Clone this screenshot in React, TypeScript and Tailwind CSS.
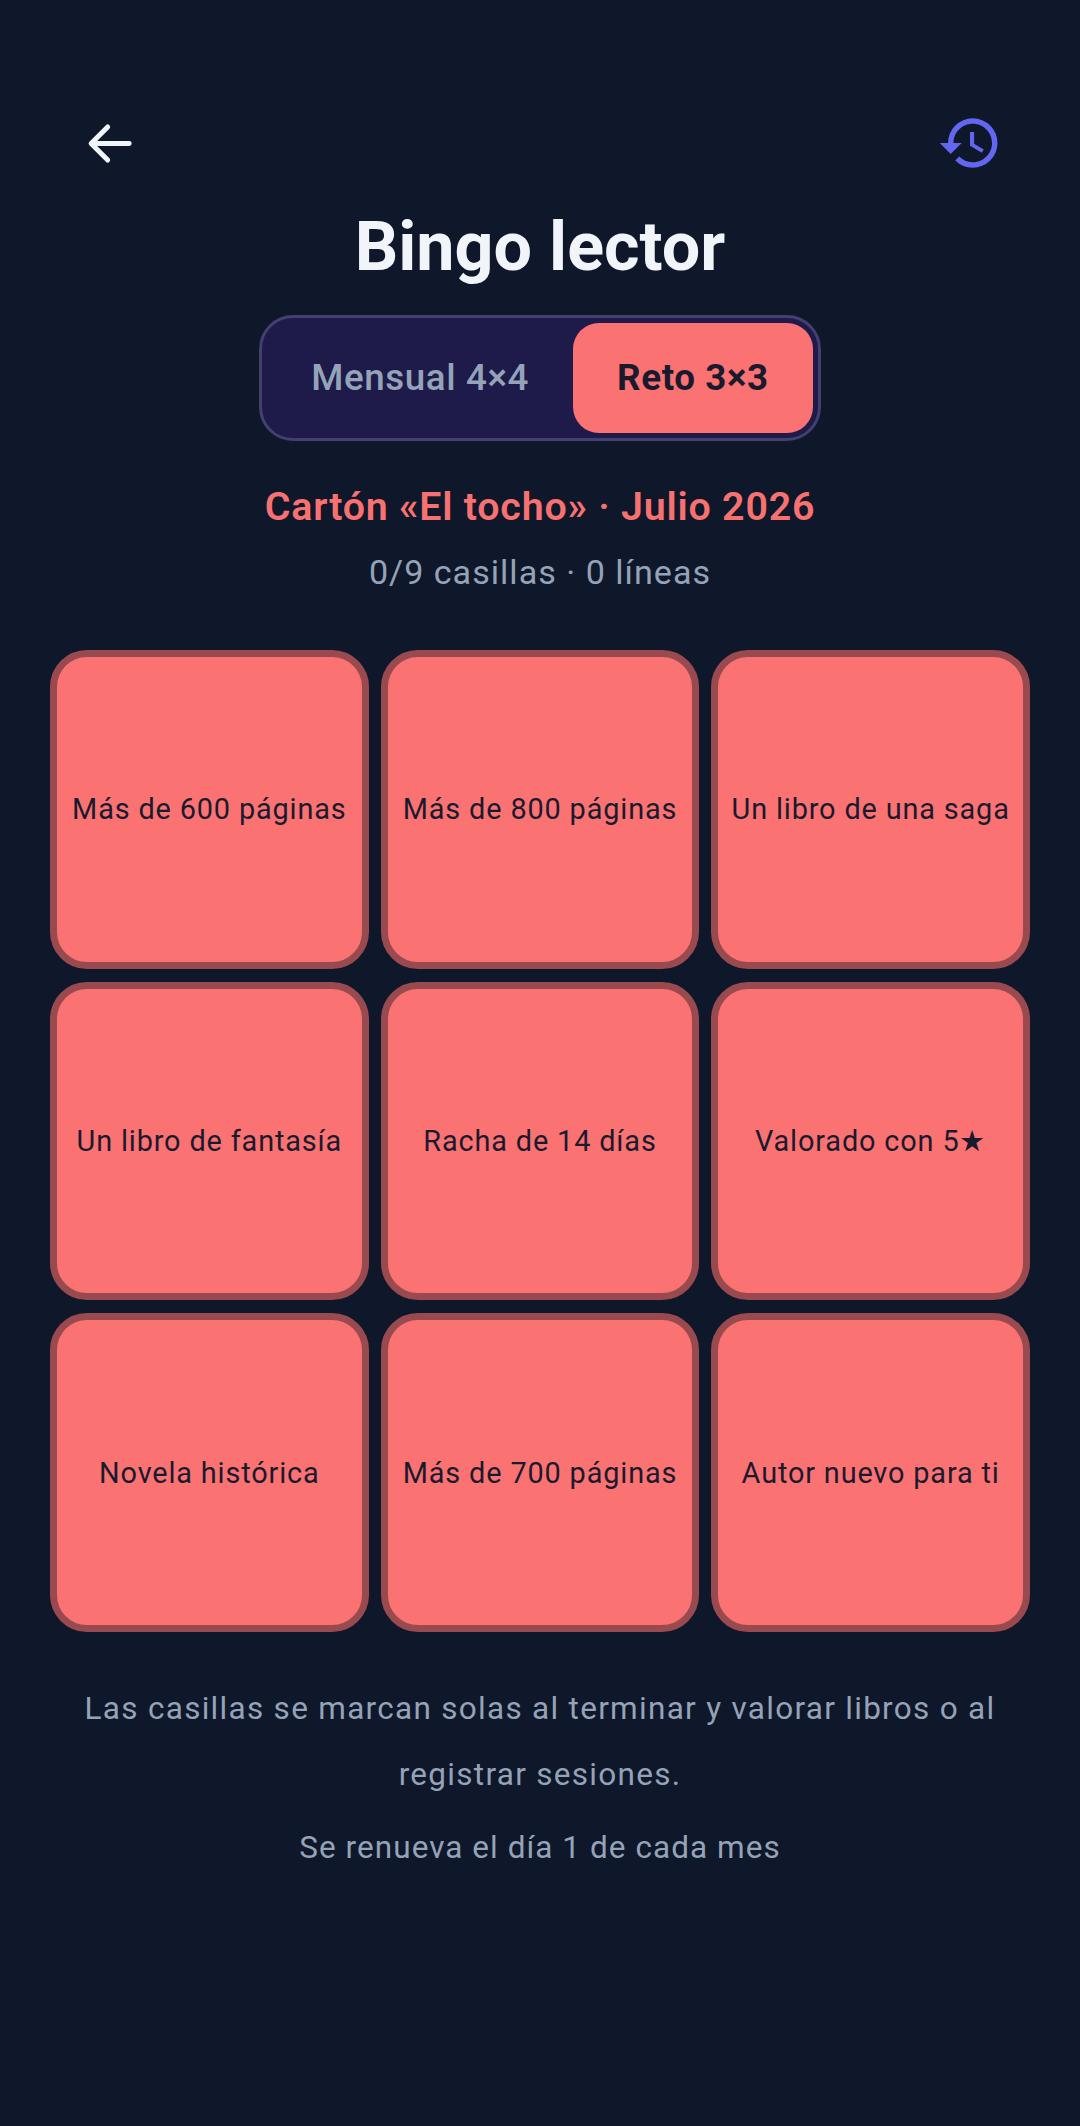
const CELLS = [
  'Más de 600 páginas',
  'Más de 800 páginas',
  'Un libro de una saga',
  'Un libro de fantasía',
  'Racha de 14 días',
  'Valorado con 5★',
  'Novela histórica',
  'Más de 700 páginas',
  'Autor nuevo para ti',
]

function BackIcon() {
  return (
    <svg width="63" height="63" viewBox="0 0 24 24" fill="none">
      <path
        d="M19.5 12H5.2M11.3 5.7 5 12l6.3 6.3"
        stroke="#f1f5f9"
        strokeWidth="1.9"
        strokeLinecap="round"
        strokeLinejoin="round"
      />
    </svg>
  )
}

function HistoryIcon() {
  return (
    <svg width="66" height="66" viewBox="0 0 24 24" fill="#6366f1">
      <path d="M13 3a9 9 0 0 0-9 9H1l3.89 3.89.07.14L9 12H6c0-3.87 3.13-7 7-7s7 3.13 7 7-3.13 7-7 7c-1.93 0-3.68-.79-4.94-2.06l-1.42 1.42A8.954 8.954 0 0 0 13 21a9 9 0 0 0 0-18zm-1 5v5l4.28 2.54.72-1.21-3.5-2.08V8H12z" />
    </svg>
  )
}

function Cell({ label }: { label: string }) {
  return (
    <div className="aspect-square rounded-[37px] border-[7px] border-[#994a4f] bg-[#fb7272] flex items-center justify-center">
      <span className="text-[28.875px] leading-[38px] tracking-[0.85px] text-[#1a1a2e] text-center">
        {label}
      </span>
    </div>
  )
}

export default function App() {
  return (
    <div className="min-h-[2126px] bg-[#0f172a] font-['Roboto',sans-serif] px-[50px] pt-[110px]">
      <div className="flex items-center justify-between h-[66px] pl-[28px] pr-[27px]">
        <BackIcon />
        <HistoryIcon />
      </div>

      <h1 className="mt-[31px] text-center text-[68.25px] leading-[80px] font-bold text-[#f1f5f9]">
        Bingo lector
      </h1>

      <div className="mt-[28px] flex justify-center">
        <div className="flex items-stretch h-[126px] rounded-[34px] border-[3px] border-[#433f6e] bg-[#1e1b4b] p-[5px]">
          <div className="flex items-center px-[44px] rounded-[26px] text-[36.75px] font-medium tracking-[0.6px] text-[#94a3b8]">
            Mensual 4×4
          </div>
          <div className="flex items-center px-[44px] rounded-[26px] bg-[#fb7272] text-[36.75px] font-bold tracking-[0.6px] text-[#1a1a2e]">
            Reto 3×3
          </div>
        </div>
      </div>

      <p className="mt-[42px] text-center text-[39.375px] leading-[48px] font-semibold tracking-[0.78px] text-[#f87171]">
        Cartón «El tocho» · Julio 2026
      </p>
      <p className="mt-[19px] text-center text-[34.125px] leading-[44px] tracking-[1px] text-[#94a3b8]">
        0/9 casillas · 0 líneas
      </p>

      <div className="mt-[56px] grid grid-cols-3 gap-x-[12px] gap-y-[13px]">
        {CELLS.map((label) => (
          <Cell key={label} label={label} />
        ))}
      </div>

      <div className="mt-[44px] text-center text-[31.5px] text-[#94a3b8]">
        <p className="leading-[66px] tracking-[1.29px]">
          Las casillas se marcan solas al terminar y valorar libros o al registrar sesiones.
        </p>
        <p className="mt-[7px] leading-[66px] tracking-[1.05px]">Se renueva el día 1 de cada mes</p>
      </div>
    </div>
  )
}
